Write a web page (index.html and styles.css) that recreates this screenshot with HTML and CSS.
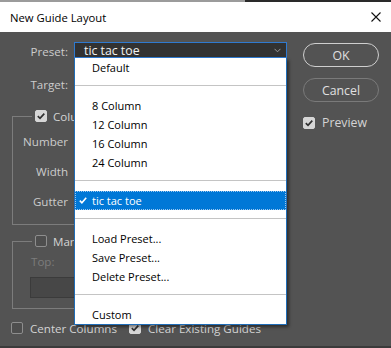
FILE: index.html
```html
<!DOCTYPE html>
<html lang="en">

<head>
    <meta charset="UTF-8">
    <meta name="viewport" content="width=device-width, initial-scale=1.0">
    <link rel="stylesheet" href="styles.css">
    <title>New Guide Layout</title>
</head>

<body>
    <div class="dialog">
        <div class="topstrip"><span class="strip-light"></span><span class="strip-dark"></span></div>
        <div class="titlebar">
            <span class="title">New Guide Layout</span>
            <svg class="close" width="10" height="10" viewBox="0 0 10 10">
                <path d="M0.5 0.5 L9.5 9.5 M9.5 0.5 L0.5 9.5" stroke="#111" stroke-width="1.1" fill="none" />
            </svg>
        </div>

        <div class="body">
            <div class="main">
                <div class="row">
                    <label class="label">Preset:</label>
                    <div class="select-wrap">
                        <div class="select">
                            <span>tic tac toe</span>
                            <svg class="chevron" width="7" height="5" viewBox="0 0 7 5">
                                <path d="M0.5 0.8 L3.5 3.8 L6.5 0.8" stroke="#9a9a9a" stroke-width="1" fill="none" />
                            </svg>
                        </div>
                        <!-- open dropdown list -->
                        <ul class="menu">
                            <li class="item">Default</li>
                            <li class="sep"></li>
                            <li class="item">8 Column</li>
                            <li class="item">12 Column</li>
                            <li class="item">16 Column</li>
                            <li class="item">24 Column</li>
                            <li class="sep"></li>
                            <li class="item selected">
                                <svg class="tick" width="8" height="7" viewBox="0 0 8 7">
                                    <path d="M0.8 3.6 L2.9 5.8 L7.2 0.8" stroke="#fff" stroke-width="1.6" fill="none" />
                                </svg>
                                tic tac toe
                            </li>
                            <li class="sep"></li>
                            <li class="item">Load Preset...</li>
                            <li class="item">Save Preset...</li>
                            <li class="item">Delete Preset...</li>
                            <li class="sep"></li>
                            <li class="item">Custom</li>
                        </ul>
                    </div>
                </div>

                <div class="row target-row">
                    <label class="label">Target:</label>
                    <div class="select"><span>Canvas</span></div>
                </div>

                <fieldset class="group columns">
                    <legend>
                        <span class="check on"></span>
                        <span>Columns</span>
                    </legend>
                    <div class="field"><label class="label">Number</label><div class="input"></div></div>
                    <div class="field"><label class="label">Width</label><div class="input"></div></div>
                    <div class="field"><label class="label">Gutter</label><div class="input"></div></div>
                </fieldset>

                <fieldset class="group margin">
                    <legend>
                        <span class="check"></span>
                        <span>Margin</span>
                    </legend>
                    <div class="margin-body">
                        <div class="top-label">Top:</div>
                        <div class="input dim"></div>
                    </div>
                </fieldset>

                <div class="bottom-row">
                    <span class="opt"><span class="check"></span>Center Columns</span>
                    <span class="opt"><span class="check on"></span>Clear Existing Guides</span>
                </div>
            </div>

            <div class="side">
                <button class="btn primary">OK</button>
                <button class="btn">Cancel</button>
                <span class="opt preview"><span class="check on"></span>Preview</span>
            </div>
        </div>
        <div class="bottomstrip"></div>
    </div>
</body>

</html>
```

FILE: styles.css
```css
body {
    margin: 0;
    background: #535353;
    font-family: "Open Sans", "Noto Sans", sans-serif;
    -webkit-font-smoothing: antialiased;
}

.dialog {
    width: 391px;
    height: 348px;
    overflow: hidden;
    background: #535353;
}

.topstrip {
    display: flex;
    height: 2px;
}

.strip-light {
    width: 245px;
    background: #9b9b9b;
}

.strip-dark {
    flex: 1;
    background: #2a2a2a;
}

.titlebar {
    height: 30px;
    background: #ffffff;
    display: flex;
    align-items: center;
    justify-content: space-between;
    padding: 0 10px 0 10px;
}

.title {
    font-size: 11.3px;
    color: #000;
}

.close {
    display: block;
}

.body {
    height: 314px;
    display: grid;
    grid-template-columns: 303px 76px;
    padding-top: 10px;
    box-sizing: border-box;
    color: #cccccc;
    font-size: 11.6px;
}

.row {
    display: grid;
    grid-template-columns: 68px 213px;
    column-gap: 6px;
    align-items: start;
}

.label {
    text-align: right;
    line-height: 16px;
}

.row .label {
    line-height: 20px;
}

.target-row {
    margin-top: 13px;
}

.select-wrap {
    position: relative;
}

.select {
    height: 16px;
    box-sizing: border-box;
    border: 1px solid #2f7ad0;
    background: #323232;
    color: #f2f2f2;
    font-size: 12.3px;
    line-height: 13px;
    padding-left: 9px;
    display: flex;
    align-items: center;
    justify-content: space-between;
}

.chevron {
    margin-right: 5px;
}

.menu {
    position: absolute;
    top: 100%;
    left: 0;
    right: 0;
    z-index: 2;
    margin: 0;
    padding: 0;
    list-style: none;
    background: #ffffff;
    border: 1px solid #1f6db8;
    border-top: 0;
    box-shadow: 2px 2px 3px rgba(0, 0, 0, 0.45);
    color: #000;
    font-size: 11px;
}

.menu .item {
    height: 19px;
    line-height: 19px;
    padding-left: 17px;
    position: relative;
}

.menu .sep {
    height: 0;
    margin: 8px 0 10px;
    border-top: 1px solid #c4c4c4;
}

.menu .selected {
    background: #0078d7;
    color: #fff;
    outline: 1px dotted #9cc8f0;
    outline-offset: -1px;
}

.tick {
    position: absolute;
    left: 4px;
    top: 6px;
}

.group {
    margin: 13px 0 0 12px;
    width: 270px;
    padding: 0;
    border: 1px solid #7c7c7c;
    min-width: 0;
}

.group legend {
    margin-left: 19px;
    padding: 0 3px;
    height: 16px;
    display: flex;
    align-items: center;
    gap: 6px;
    font-size: 11.6px;
    color: #d4d4d4;
}

.check {
    display: inline-block;
    width: 12px;
    height: 12px;
    box-sizing: border-box;
    border: 1px solid #8e8e8e;
    border-radius: 2px;
    background: #4e4e4e;
    flex: none;
}

.check.on {
    border-color: #d6d6d6;
    background: #d6d6d6 url("data:image/svg+xml;utf8,<svg xmlns='http://www.w3.org/2000/svg' width='10' height='10' viewBox='0 0 10 10'><path d='M1.8 5.2 L4 7.3 L8.3 2.6' stroke='%23303030' stroke-width='1.7' fill='none'/></svg>") center / 10px 10px no-repeat;
}

.columns {
    padding: 7px 0 11px;
}

.field {
    display: grid;
    grid-template-columns: 55px 100px;
    column-gap: 6px;
    align-items: center;
    height: 22px;
    margin-bottom: 8px;
}

.field:last-child {
    margin-bottom: 0;
}

.input {
    height: 21px;
    box-sizing: border-box;
    background: #454545;
    border: 1px solid #3b3b3b;
}

.margin {
    margin-top: 8px;
    padding: 0;
}

.margin-body {
    padding: 5px 0 10px 17px;
}

.top-label {
    line-height: 16px;
    color: #7c7c7c;
    padding-left: 1px;
}

.input.dim {
    width: 60px;
    margin-top: 7px;
    background: #474747;
}

.bottom-row {
    display: flex;
    gap: 12px;
    margin: 11px 0 0 11px;
    height: 16px;
    align-items: center;
    color: #d4d4d4;
}

.opt {
    display: flex;
    align-items: center;
    gap: 7px;
    white-space: nowrap;
}

.side {
    display: flex;
    flex-direction: column;
    align-items: flex-start;
}

.btn {
    width: 76px;
    height: 24px;
    margin: 1px 0 10px;
    border-radius: 12px;
    border: 1px solid #7a7a7a;
    background: transparent;
    color: #e0e0e0;
    font-family: "Open Sans", "Noto Sans", sans-serif;
    font-size: 12.3px;
    padding: 0;
}

.btn.primary {
    border-color: #cfcfcf;
}

.preview {
    margin-top: 2px;
    font-size: 12.3px;
    color: #d4d4d4;
}

.bottomstrip {
    height: 2px;
    background: #3b3b3b;
}
```
